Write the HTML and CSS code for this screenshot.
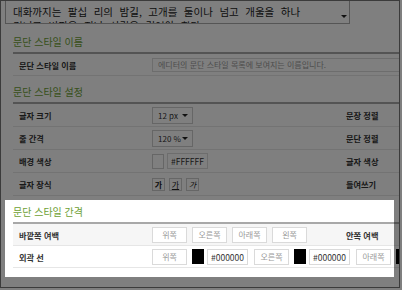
FILE: index.html
```html
<!DOCTYPE html>
<html lang="ko">
<head>
<meta charset="utf-8">
<link rel="stylesheet" href="styles.css">
</head>
<body>
<div class="frame">
  <div class="preview">
    <div class="preview-text">대화까지는 팔십 리의 밤길, 고개를 둘이나 넘고 개울을 하나<br>건너고 벌판을 지나 산길을 걸어야 한다.</div>
    <div class="preview-scroll"><span class="tri"></span></div>
  </div>

  <section class="sec">
    <h2 class="sec-title">문단 스타일 이름</h2>
    <div class="row">
      <div class="label">문단 스타일 이름</div>
      <div class="ctrl"><span class="box name-box">에디터의 문단 스타일 목록에 보여지는 이름입니다.</span></div>
    </div>
  </section>

  <section class="sec">
    <h2 class="sec-title">문단 스타일 설정</h2>
    <div class="row tall">
      <div class="label">글자 크기</div>
      <div class="ctrl"><span class="select">12 px<span class="tri"></span></span></div>
      <div class="label">문장 정렬</div>
    </div>
    <div class="row tall">
      <div class="label">줄 간격</div>
      <div class="ctrl"><span class="select">120 %<span class="tri"></span></span></div>
      <div class="label">문단 정렬</div>
    </div>
    <div class="row tall">
      <div class="label">배경 색상</div>
      <div class="ctrl"><span class="swatch white"></span><span class="box hex">#FFFFFF</span></div>
      <div class="label">글자 색상</div>
    </div>
    <div class="row tall">
      <div class="label">글자 장식</div>
      <div class="ctrl"><span class="deco bold">가</span><span class="deco under">가</span><span class="deco ital">가</span></div>
      <div class="label">들여쓰기</div>
    </div>
  </section>

  <section class="sec">
    <h2 class="sec-title">문단 스타일 간격</h2>
    <div class="row shade">
      <div class="label">바깥쪽 여백</div>
      <div class="ctrl"><span class="box side">위쪽</span><span class="box side">오른쪽</span><span class="box side">아래쪽</span><span class="box side">왼쪽</span></div>
      <div class="label">안쪽 여백</div>
    </div>
    <div class="row">
      <div class="label">외곽 선</div>
      <div class="ctrl wide"><span class="box side">위쪽</span><span class="swatch black"></span><span class="box hex">#000000</span><span class="box side">오른쪽</span><span class="swatch black"></span><span class="box hex">#000000</span><span class="box side">아래쪽</span><span class="swatch black"></span></div>
    </div>
  </section>
</div>
<div class="spotlight"></div>
</body>
</html>
```

FILE: styles.css
```css
* { box-sizing: border-box; }
html, body { margin: 0; padding: 0; background: #fff; }
body {
  font-family: "Noto Sans CJK KR", "Noto Sans", sans-serif;
  color: #333;
  overflow: hidden;
  width: 402px;
  height: 290px;
}
.frame {
  width: 400px;
  height: 288px;
  border: 1px solid #777;
  padding-left: 4px;
  overflow: hidden;
}
.preview {
  width: 345px;
  height: 23px;
  border: 1px solid #aaa;
  border-top: none;
  display: flex;
  overflow: hidden;
}
.preview-text {
  flex: 1;
  padding: 4px 0 0 7px;
  font-size: 10.5px;
  line-height: 14px;
  word-spacing: 3.6px;
  color: #222;
  white-space: nowrap;
  overflow: hidden;
}
.preview-scroll {
  width: 10px;
  display: flex;
  align-items: flex-end;
  justify-content: center;
  padding-bottom: 5px;
}
.tri {
  display: inline-block;
  width: 0;
  height: 0;
  border-left: 3px solid transparent;
  border-right: 3px solid transparent;
  border-top: 3px solid #222;
}
.sec {
  width: 386px;
  margin: 8px 0 0 8px;
  overflow: visible;
}
.sec + .sec { margin-top: 6px; }
.sec-title {
  margin: 0;
  height: 22px;
  line-height: 20px;
  font-size: 10px;
  font-weight: normal;
  color: #6e9f35;
  border-bottom: 2px solid #a8a8a8;
  width: 420px;
}
.row {
  display: grid;
  grid-template-columns: 139px 188px 100px;
  align-items: center;
  width: 420px;
  height: 22px;
  border-bottom: 1px solid #e6e6e6;
}
.row.tall { height: 23px; }
.row.shade { background: #f6f6f6; }
.label {
  padding-left: 6px;
  font-size: 8.2px;
  font-weight: bold;
  color: #333;
  white-space: nowrap;
}
.ctrl {
  display: flex;
  align-items: center;
  white-space: nowrap;
}
.ctrl.wide { grid-column: 2 / 4; }
.box {
  display: inline-flex;
  align-items: center;
  flex-shrink: 0;
  height: 16px;
  border: 1px solid #dadada;
  background: #fff;
  font-size: 8px;
  color: #999;
  padding-left: 5px;
}
.name-box {
  width: 300px;
  height: 14px;
  font-size: 8px;
  color: #9a9a9a;
}
.side {
  width: 35px;
  margin-right: 5px;
  justify-content: center;
  padding-left: 0;
}
.hex {
  width: 41px;
  margin-right: 6px;
  font-size: 8.5px;
  color: #333;
  padding-left: 3px;
}
.swatch {
  display: inline-block;
  flex-shrink: 0;
  width: 12px;
  height: 15px;
  margin-right: 3px;
  border: 1px solid #ccc;
}
.swatch.white { background: #fff; }
.swatch.black { background: #000; border-color: #000; }
.select {
  display: inline-flex;
  align-items: center;
  justify-content: space-between;
  width: 41px;
  height: 17px;
  padding: 0 4px 0 5px;
  border: 1px solid #ccc;
  background: #fff;
  font-size: 8px;
  color: #333;
}
.deco {
  display: inline-flex;
  align-items: center;
  justify-content: center;
  width: 13px;
  height: 13px;
  margin-right: 4px;
  border: 1px solid #ccc;
  background: #fff;
  font-size: 8px;
  color: #222;
}
.deco.bold { font-weight: bold; }
.deco.under { text-decoration: underline; }
.deco.ital { font-style: italic; }
.spotlight {
  position: absolute;
  left: 5px;
  top: 200px;
  width: 389px;
  height: 77px;
  box-shadow: 0 0 0 800px rgba(0, 0, 0, 0.5);
  pointer-events: none;
}
```
